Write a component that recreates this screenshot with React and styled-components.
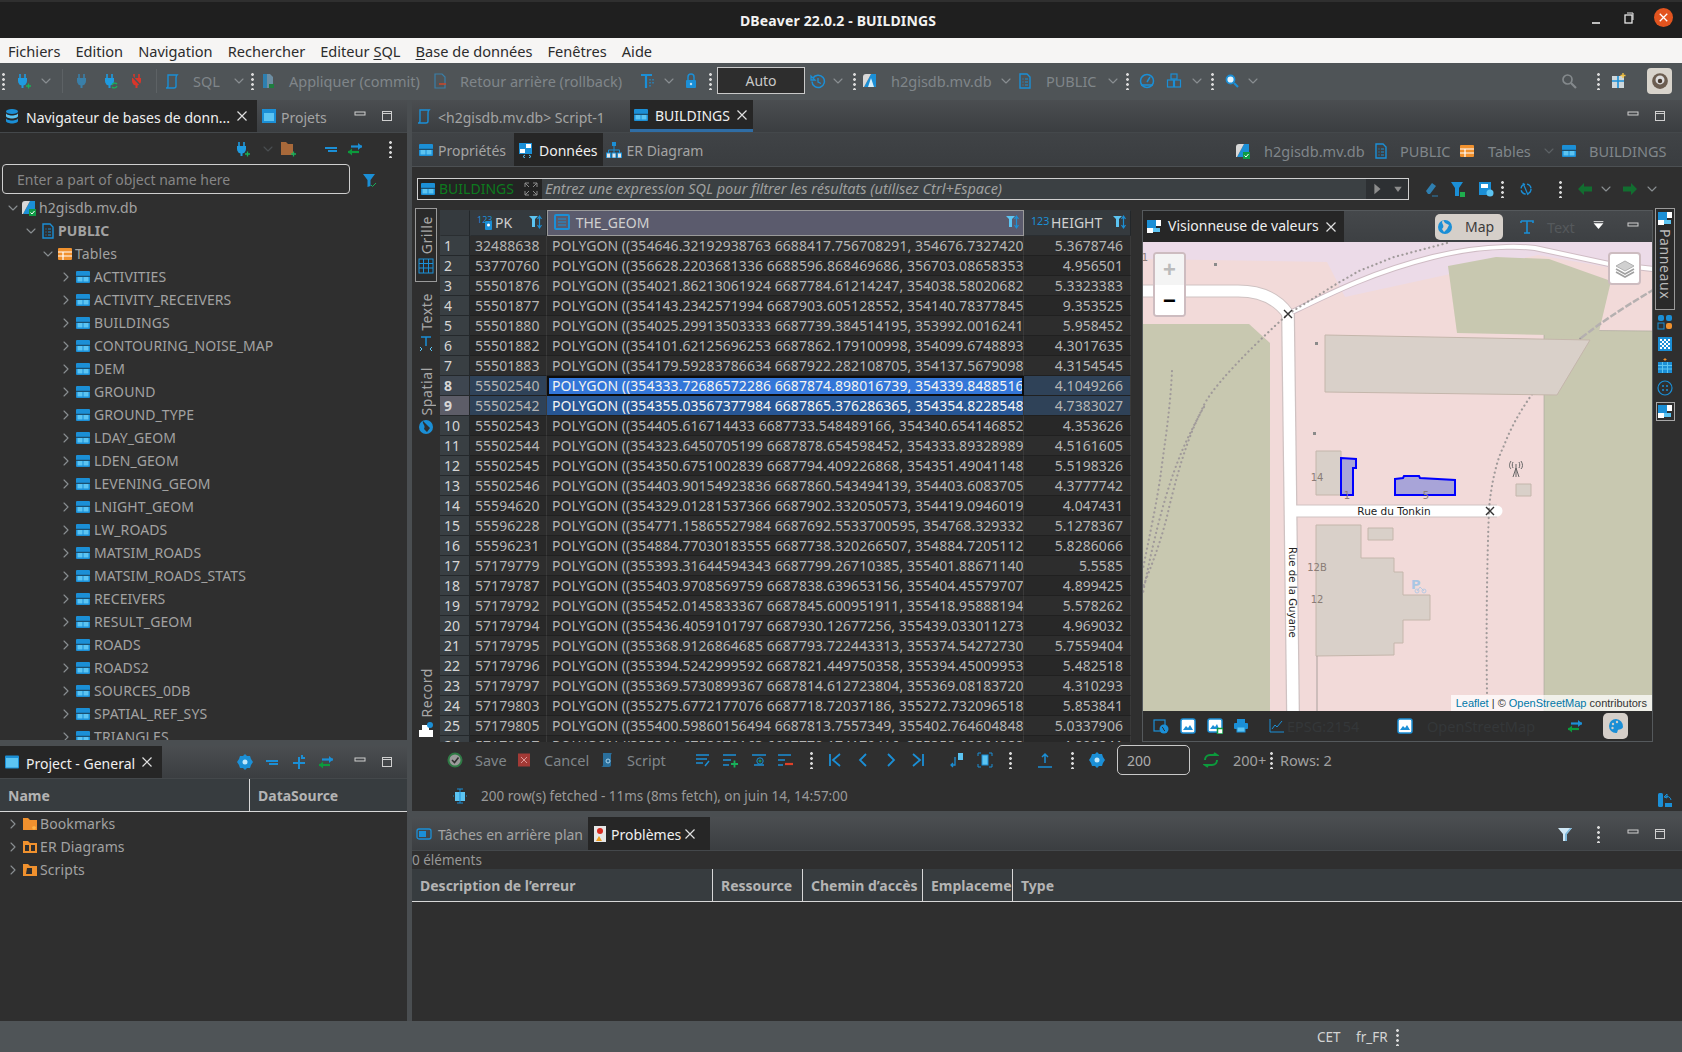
import React from 'react'
import styled, { createGlobalStyle } from 'styled-components'

const FONT = `"Noto Sans", "Open Sans", sans-serif`
const BLUE = '#1b8fd6'
const SKY = '#5cc4f2'
const ORANGE = '#f0912e'
const GREEN = '#0c9a3c'

const Global = createGlobalStyle`
    html, body { margin: 0; padding: 0; background: #2f2f2f; overflow: hidden; }
    * { box-sizing: border-box; }
    #root { width: 1682px; height: 1052px; }
`

const Window = styled.div`
    width: 1682px;
    height: 1052px;
    display: flex;
    flex-direction: column;
    background: #2f2f2f;
    color: #a6a6a6;
    font-family: ${FONT};
    font-size: 14px;
    overflow: hidden;
`

const TitleBar = styled.div`
    height: 38px;
    flex: none;
    display: flex;
    align-items: center;
    justify-content: center;
    position: relative;
    background: #1f1f1f;
    border-top: 2px solid #2f2f2f;
    color: #f2f2f2;
    font-weight: 700;
    font-size: 14px;
    letter-spacing: 0.15px;
    padding-right: 6px;
`

const WinButtons = styled.div`
    position: absolute;
    right: 9px;
    top: 6px;
    display: flex;
    align-items: center;
    gap: 17px;
`

const WinClose = styled.div`
    width: 19px;
    height: 19px;
    border-radius: 50%;
    background: #e2541f;
    display: flex;
    align-items: center;
    justify-content: center;
`

const MenuBar = styled.div`
    height: 25px;
    flex: none;
    display: flex;
    align-items: center;
    gap: 15px;
    padding-left: 8px;
    background: #f6f5f4;
    color: #2c2c2c;
    font-size: 14.6px;
`

const MainBar = styled.div`
    height: 37px;
    flex: none;
    background: #4f5457;
    display: flex;
    align-items: center;
    padding-bottom: 2px;
`

const Slots = styled.div`
    display: flex;
    align-items: center;
    height: 100%;
    flex: none;
    padding-left: ${(p) => p.$pl}px;
`

const Slot = styled.div`
    flex: none;
    width: ${(p) => p.$w}px;
    display: flex;
    align-items: center;
    white-space: nowrap;
`

const DimText = styled.span`
    color: ${(p) => p.$c || '#80868a'};
    font-size: 14.5px;
`

const Dots = styled.span`
    display: block;
    width: 3px;
    height: 18px;
    margin-left: ${(p) => p.$ml || 0}px;
    margin-right: ${(p) => p.$mr || 0}px;
    background: radial-gradient(circle, #d8d8d8 1.3px, transparent 1.5px) 0 0 / 3px 5px repeat-y;
`

const Sep = styled.span`
    display: block;
    width: 1px;
    height: 24px;
    background: #5d6265;
`

const AutoBox = styled.div`
    width: 88px;
    height: 27px;
    background: #2d2d2d;
    border: 1px solid #c9c9c9;
    display: flex;
    align-items: center;
    justify-content: center;
    color: #c8c8c8;
    font-size: 14px;
`

const Perspective = styled.div`
    width: 25px;
    height: 26px;
    border-radius: 4px;
    background: #d8d4cc;
    display: flex;
    align-items: center;
    justify-content: center;
`

const Workbench = styled.div`
    flex: 1;
    min-height: 0;
    display: flex;
    background: #4a4e51;
`

const LeftColumn = styled.div`
    width: 407px;
    flex: none;
    display: flex;
    flex-direction: column;
    gap: 6px;
`

const RightColumn = styled.div`
    width: 1270px;
    flex: none;
    margin-left: 5px;
    display: flex;
    flex-direction: column;
    gap: 6px;
`

const Pane = styled.div`
    height: ${(p) => p.$h}px;
    flex: none;
    display: flex;
    flex-direction: column;
    background: #2f2f2f;
    overflow: hidden;
`

const TabBar = styled.div`
    height: ${(p) => p.$h || 33}px;
    flex: none;
    display: flex;
    align-items: stretch;
    background: linear-gradient(#4b4e51, #3b3e41);
    border-bottom: 1px solid #44484b;
`

const Tab = styled.div`
    display: flex;
    align-items: center;
    gap: ${(p) => p.$gap || 6}px;
    padding: ${(p) => p.$pad || '0 8px'};
    width: ${(p) => (p.$w ? p.$w + 'px' : 'auto')};
    background: ${(p) => (p.$active ? '#262626' : 'transparent')};
    color: ${(p) => (p.$active ? '#f0f0f0' : '#a4a4a4')};
    font-size: 14px;
    white-space: nowrap;
    border-bottom: ${(p) => (p.$line ? '3px solid #2f6da5' : 'none')};
    flex: none;

    & > span {
        padding: ${(p) => (p.$flat ? '0 0 2px' : '2px 0 0')};
    }
`

const TabEnd = styled.div`
    margin-left: auto;
    display: flex;
    align-items: center;
    gap: ${(p) => p.$gap || 15}px;
    padding-right: ${(p) => p.$pr || 16}px;
`

const WinCtl = styled.div`
    display: flex;
    align-items: center;
    gap: 15px;
    margin-left: ${(p) => p.$ml || 0}px;
`

const NavTools = styled.div`
    height: 31px;
    flex: none;
    display: flex;
    align-items: center;
`

const SearchRow = styled.div`
    height: 32px;
    flex: none;
    display: flex;
    align-items: center;
    padding-left: 2px;
    gap: 11px;
`

const SearchBox = styled.div`
    width: 348px;
    height: 30px;
    align-self: flex-start;
    border: 1px solid #cfcfcf;
    border-radius: 4px;
    display: flex;
    align-items: center;
    padding-left: 14px;
    color: #868686;
    font-size: 14px;
`

const TreeList = styled.div`
    flex: 1;
    min-height: 0;
    overflow: hidden;
`

const TreeRow = styled.div`
    height: ${(p) => p.$h || 23}px;
    display: flex;
    align-items: center;
    padding-left: ${(p) => p.$pad}px;
    gap: ${(p) => p.$gap || 2}px;
    font-weight: ${(p) => (p.$bold ? 700 : 400)};
    font-size: 14px;
    letter-spacing: 0.1px;
    color: #a2a2a2;
    white-space: nowrap;
`

const ColumnHead = styled.div`
    height: ${(p) => p.$h || 33}px;
    flex: none;
    display: flex;
    background: #373c3f;
    border-bottom: 1px solid #d8d8d8;
    font-weight: 700;
    font-size: 14px;
    color: #b4b4b4;
`

const ColumnCell = styled.div`
    width: ${(p) => (p.$w ? p.$w + 'px' : 'auto')};
    flex: ${(p) => (p.$w ? 'none' : 1)};
    display: flex;
    align-items: center;
    padding-left: 8px;
    white-space: nowrap;
    overflow: hidden;
    border-right: ${(p) => (p.$w ? '1px solid #d8d8d8' : 'none')};
`

const SubTabs = styled.div`
    height: 34px;
    flex: none;
    display: flex;
    align-items: stretch;
    background: linear-gradient(#404346, #3a3d40);
    border-bottom: 1px solid #4c5053;
`

const Crumbs = styled.div`
    margin-left: auto;
    display: flex;
    align-items: center;
    height: 100%;
    padding-top: 2px;
`

const FilterRow = styled.div`
    height: 41px;
    flex: none;
    display: flex;
    align-items: center;
    padding: 2px 0 0 5px;
`

const FilterBox = styled.div`
    width: 992px;
    height: 22px;
    flex: none;
    display: flex;
    align-items: stretch;
    background: #3b4043;
    border: 1px solid #cfcfcf;
    font-size: 14px;
`

const FilterTable = styled.div`
    width: 124px;
    flex: none;
    background: #232323;
    display: flex;
    align-items: center;
    gap: 3px;
    padding: 0 3px 0 2px;
    color: #0d7a1e;
    white-space: nowrap;

    & > span {
        padding-bottom: 1px;
    }
    & > svg:last-child {
        margin-left: auto;
    }
`

const FilterHint = styled.div`
    flex: 1;
    padding: 0 0 2px 3px;
    display: flex;
    align-items: center;
    font-style: italic;
    font-size: 14.5px;
    color: #a0a0a0;
    white-space: nowrap;
`

const FilterEnd = styled.div`
    width: 42px;
    flex: none;
    background: #2d3033;
    display: flex;
    align-items: center;
    justify-content: space-around;
`

const EditorBody = styled.div`
    height: 534px;
    flex: none;
    display: flex;
    padding-left: 3px;
`

const VerticalTabs = styled.div`
    width: 22px;
    flex: none;
    margin-right: 3px;
    display: flex;
    flex-direction: column;
    align-items: center;
`

const VTab = styled.div`
    width: 100%;
    height: ${(p) => p.$h}px;
    margin-top: ${(p) => p.$mt || 0}px;
    flex: none;
    display: flex;
    flex-direction: column;
    align-items: center;
    justify-content: center;
    gap: 4px;
    border: ${(p) => (p.$active ? '1px solid #9a9a9a' : 'none')};
    background: ${(p) => (p.$active ? '#2a2a2a' : 'transparent')};
    color: #a8a8a8;
    font-size: 14px;
    letter-spacing: 0.6px;
`

const VLabel = styled.span`
    writing-mode: vertical-rl;
    transform: rotate(${(p) => (p.$down ? 0 : 180)}deg);
`

const GridWrap = styled.div`
    width: 691px;
    flex: none;
    margin-top: 2px;
    margin-right: 11px;
    height: 532px;
    overflow: hidden;
    background: #2b2b2b;
`

const GridRow = styled.div`
    display: grid;
    grid-template-columns: 30px 77px 477px 107px;
    height: ${(p) => (p.$head ? 26 : 20)}px;
`

const HeadCell = styled.div`
    display: flex;
    align-items: center;
    gap: 2px;
    padding-left: 6px;
    padding-bottom: 2px;
    background: ${(p) => (p.$sel ? '#5b5b6d' : '#353a3e')};
    border-right: 1px solid ${(p) => (p.$sel ? '#9a9a9a' : '#23272a')};
    border-top: 1px solid ${(p) => (p.$sel ? '#9a9a9a' : 'transparent')};
    border-left: 1px solid ${(p) => (p.$sel ? '#9a9a9a' : 'transparent')};
    border-bottom: 1px solid ${(p) => (p.$sel ? '#9a9a9a' : '#2a2e31')};
    color: #d0d0d0;
    font-size: 14px;
`

// the underscore falls outside the painted line, as in the table header of the app
const ClippedName = styled.span`
    display: block;
    height: 15px;
    line-height: 16px;
    overflow: hidden;
    white-space: pre;
`

const SortMark = styled.span`
    margin-left: auto;
    margin-right: 2px;
    display: flex;
`

const NumCell = styled.div`
    background: ${(p) => (p.$focus ? '#5d5d68' : p.$active ? '#3e4650' : '#393f43')};
    color: #d6d6d6;
    display: flex;
    align-items: center;
    padding-left: 4px;
    font-size: 14px;
    border-bottom: 1px solid #24282b;
    border-right: 1px solid #23272a;
    font-weight: ${(p) => (p.$active || p.$focus ? 700 : 400)};
`

const DataCell = styled.div`
    background: ${(p) => (p.$bg ? p.$bg : p.$odd ? '#282828' : '#2d2d2d')};
    color: ${(p) => p.$color || '#b5b5b5'};
    display: flex;
    align-items: center;
    padding-left: 5px;
    padding-right: ${(p) => (p.$right ? 7 : 0)}px;
    justify-content: ${(p) => (p.$right ? 'flex-end' : 'flex-start')};
    white-space: nowrap;
    overflow: hidden;
    font-size: 14px;
    letter-spacing: 0.05px;
    border-bottom: 1px solid #202020;
    border-right: 1px solid #3a3a3a;
    outline: ${(p) => (p.$cursor ? '2px solid #0c0c0c' : 'none')};
    outline-offset: -2px;
`

const ValuePanel = styled.div`
    width: 511px;
    flex: none;
    margin-top: 2px;
    height: 532px;
    display: flex;
    flex-direction: column;
    border: 1px solid #55595c;
`

const ValueTabs = styled.div`
    height: 31px;
    flex: none;
    display: flex;
    align-items: stretch;
    background: linear-gradient(#45484b, #3d4043);
`

const ValueTools = styled.div`
    display: flex;
    align-items: center;
    flex: none;
`

const MapToggle = styled.div`
    width: 68px;
    height: 26px;
    flex: none;
    margin-left: ${(p) => p.$ml}px;
    background: #d5cfc9;
    border-radius: 5px;
    display: flex;
    align-items: center;
    gap: 12px;
    padding-left: 2px;
    color: #3c3c3c;
    font-size: 14px;
`

const MapFrame = styled.div`
    height: 469px;
    flex: none;
    position: relative;
    background: #f2dad9;
    overflow: hidden;
`

const ZoomBox = styled.div`
    position: absolute;
    left: 10px;
    top: 10px;
    width: 33px;
    height: 65px;
    border: 2px solid #cdbcc0;
    border-radius: 4px;
    background: #fff;
    overflow: hidden;
`

const ZoomBtn = styled.div`
    height: 31px;
    display: flex;
    align-items: center;
    justify-content: center;
    background: ${(p) => (p.$off ? '#f4f4f4' : '#fff')};
    color: ${(p) => (p.$off ? '#bbb' : '#000')};
    font: 700 22px "Liberation Sans", sans-serif;
`

const LayersBtn = styled.div`
    position: absolute;
    right: 11px;
    top: 10px;
    width: 33px;
    height: 33px;
    border: 2px solid #cdbcc0;
    border-radius: 4px;
    background: #fff;
    display: flex;
    align-items: center;
    justify-content: center;
`

const Attribution = styled.div`
    position: absolute;
    right: 0;
    bottom: 0;
    height: 16px;
    padding: 0 5px;
    background: rgba(255, 255, 255, 0.72);
    font: 11px "Liberation Sans", sans-serif;
    color: #333;
    display: flex;
    align-items: center;
    white-space: pre;
`

const MapLink = styled.span`
    color: #0078a8;
`

const ValueBar = styled.div`
    flex: 1;
    display: flex;
    align-items: center;
    background: #2d2d2d;
`

const PaletteBtn = styled.div`
    width: 25px;
    height: 26px;
    border-radius: 5px;
    background: #d5cfc9;
    display: flex;
    align-items: center;
    justify-content: center;
`

const SideStrip = styled.div`
    width: 29px;
    flex: none;
    display: flex;
    flex-direction: column;
    align-items: center;
    padding-right: 5px;
    gap: 6px;
`

const SideTab = styled.div`
    width: 20px;
    height: 102px;
    border: 1px solid #9a9a9a;
    display: flex;
    flex-direction: column;
    align-items: center;
    gap: 2px;
    padding-top: 2px;
    color: #b8b8b8;
    font-size: 14px;
    letter-spacing: 0.6px;
    background: #2a2a2a;
    margin-bottom: -2px;
`

const SideFrame = styled.div`
    width: 19px;
    height: 19px;
    border: 1px solid #a8a8a8;
    display: flex;
    align-items: center;
    justify-content: center;
`

const DataBar = styled.div`
    height: 36px;
    flex: none;
    display: flex;
    align-items: center;
`

const FetchInput = styled.div`
    width: 73px;
    height: 30px;
    border: 1px solid #c9c9c9;
    border-radius: 5px;
    display: flex;
    align-items: center;
    padding-left: 9px;
    color: #adadad;
    font-size: 14px;
`

const StatusLine = styled.div`
    flex: 1;
    display: flex;
    align-items: center;
    padding: 3px 9px 0 40px;
    gap: 13px;
    color: #9a9a9a;
    font-size: 13.5px;
`

const StatusEnd = styled.span`
    margin-left: auto;
    margin-top: 8px;
    display: flex;
`

const CountLine = styled.div`
    height: 18px;
    flex: none;
    display: flex;
    align-items: center;
    color: #989898;
    font-size: 13.5px;
`

const StatusBar = styled.div`
    height: 31px;
    flex: none;
    background: #4f5457;
    display: flex;
    align-items: center;
    color: #d4d4d4;
    font-size: 13.5px;
`

const plug = (c) => (
    <>
        <path d="M5 1v4M10 1v4" stroke={c} strokeWidth="1.6" fill="none" />
        <path d="M3 5h9v3a4.5 4.5 0 0 1-9 0z" fill={c} />
        <path d="M7.5 12v3" stroke={c} strokeWidth="2" />
    </>
)

const ICONS = {
    plugNew: <>{plug('#1f9be0')}<path d="M11 13h5M13.5 10.5v5" stroke="#18b05a" strokeWidth="1.3" /></>,
    plugDim: <>{plug('#3a7fa8')}</>,
    plugSync: <>{plug('#1f9be0')}<path d="M10 12a3 3 0 0 1 5-1M15 13a3 3 0 0 1-5 1" stroke="#18b05a" strokeWidth="1.3" fill="none" /></>,
    plugOff: <>{plug('#d9362a')}<path d="M2 2l12 13" stroke="#4f5457" strokeWidth="1.5" /></>,
    script: <path d="M4 2h9c-1 1-1 2-1 3v8c0 1-1 2-2 2H2c1 0 2-.5 2-2z" fill="none" stroke={BLUE} strokeWidth="1.4" />,
    commit: <><path d="M3 1h7l3 3v11H3z" fill="#6d8ea3" /><path d="M3 1h4v14H3z" fill="#2d7fb0" /><rect x="9" y="11" width="5" height="4" fill="#1e7d3e" /></>,
    rollback: <><path d="M3 1h7l3 3v11H3z" fill="none" stroke="#3a7fa8" strokeWidth="1.2" /><path d="M7 11h7" stroke="#c6482c" strokeWidth="1.6" /></>,
    ttable: <><path d="M2 2h11M7 2v13" stroke={BLUE} strokeWidth="2.2" /><path d="M11 6v8M14 6v6" stroke={BLUE} strokeWidth="1.2" strokeDasharray="1.5 1.5" /></>,
    lock: <><path d="M5 7V4a3 3 0 0 1 6 0v3" stroke={BLUE} strokeWidth="1.5" fill="none" /><rect x="3" y="7" width="10" height="8" rx="1" fill={BLUE} /><circle cx="8" cy="11" r="1.2" fill="#bfe3f8" /></>,
    history: <><path d="M3 5a6.2 6.2 0 1 1-1 3.5" stroke={BLUE} strokeWidth="1.5" fill="none" /><path d="M1 3v4h4zM8 5v4l3 1.5" stroke={BLUE} strokeWidth="1.3" fill="none" /></>,
    db: <><path d="M2 14L9 1h5v13z" fill={BLUE} /><path d="M2 14L9 1H4a3 3 0 0 0-3 3v10z" fill="#d8d8d8" /><path d="M9 5l3 9H6z" fill="#d8f0fb" /></>,
    dbOk: <><path d="M2 14L9 1h5v13z" fill={BLUE} /><path d="M2 14L9 1H4a3 3 0 0 0-3 3v10z" fill="#d8d8d8" /><rect x="8" y="9" width="7" height="7" fill="#109a45" /><path d="M9.5 12.5l1.5 1.5 2.5-3" stroke="#fff" fill="none" /></>,
    schema: <><path d="M3 1h7l3 3v11H3z" fill="none" stroke={BLUE} strokeWidth="1.4" /><path d="M5.5 6h1M8 6h3M5.5 9h1M8 9h3M5.5 12h1M8 12h3" stroke={BLUE} strokeWidth="1.2" /></>,
    gauge: <><circle cx="8" cy="8" r="6.5" fill="none" stroke={BLUE} strokeWidth="1.5" /><path d="M8 9l3-5M2 12h12" stroke={BLUE} strokeWidth="1.5" /></>,
    boxes: <><rect x="5" y="1" width="6" height="5" fill="none" stroke={BLUE} strokeWidth="1.2" /><rect x="1.5" y="7" width="6" height="7" fill="none" stroke={BLUE} strokeWidth="1.2" /><rect x="8.5" y="7" width="6" height="7" fill="none" stroke={BLUE} strokeWidth="1.2" /></>,
    find: <><circle cx="6.5" cy="6.5" r="4" fill="#e4f4fd" stroke={BLUE} strokeWidth="1.8" /><path d="M10 10l4 4" stroke={BLUE} strokeWidth="2.2" /></>,
    findDim: <><circle cx="6.5" cy="6.5" r="4.5" fill="none" stroke="#84898c" strokeWidth="1.7" /><path d="M10 10l5 5" stroke="#84898c" strokeWidth="2.2" /></>,
    perspAdd: <><rect x="1" y="3" width="12" height="12" fill="#cfd8dc" /><path d="M1 8h12M7 3v12" stroke="#1b8fd6" strokeWidth="1.6" /><path d="M12 0v5M9.5 2.5h5" stroke="#f0c040" strokeWidth="1.4" /></>,
    navDb: <><ellipse cx="8" cy="3.5" rx="6" ry="2.5" fill={BLUE} /><path d="M2 5v3c0 1.5 3 2.5 6 2.5S14 9.5 14 8V5c0 1.5-3 2.5-6 2.5S2 6.5 2 5z" fill={SKY} /><path d="M2 10v3c0 1.5 3 2.5 6 2.5s6-1 6-2.5v-3c0 1.5-3 2.5-6 2.5s-6-1-6-2.5z" fill={BLUE} /></>,
    project: <><rect x="1" y="1" width="14" height="14" fill={BLUE} /><rect x="3" y="5" width="10" height="8" fill={SKY} /></>,
    projectWide: <><rect x="1" y="1.5" width="14" height="13" rx="1" fill={BLUE} /><rect x="2" y="4" width="12" height="9.5" fill={SKY} /></>,
    table: <><rect x="1" y="2" width="14" height="12" rx="1" fill={BLUE} /><rect x="2.5" y="8" width="5" height="4.5" fill={SKY} /><rect x="8.5" y="8" width="5" height="4.5" fill={SKY} /><path d="M1 7.3h14" stroke="#1c3f55" strokeWidth="1" /></>,
    data: <><rect x="1" y="1" width="13" height="11" fill={BLUE} /><rect x="8" y="2" width="5" height="4" fill="#fff" /><rect x="2" y="7" width="5" height="4" fill="#fff" /><path d="M7 13l-2 1.5 2 1.5M11 13l2 1.5-2 1.5" stroke={SKY} fill="none" /></>,
    er: <><rect x="6" y="0" width="4" height="4" fill={BLUE} /><path d="M8 4v4M2.5 11V8h11v3M8 8v3" stroke={BLUE} fill="none" /><rect x="0.5" y="11" width="4" height="5" fill="#e6e6e6" stroke={BLUE} /><rect x="6" y="11" width="4" height="5" fill="#e6e6e6" stroke={BLUE} /><rect x="11.5" y="11" width="4" height="5" fill="#e6e6e6" stroke={BLUE} /></>,
    tables: <><rect x="1" y="2" width="14" height="12" rx="1" fill={ORANGE} /><path d="M1 6h14M1 10h14M6 6v8" stroke="#fff" strokeWidth="1.2" /></>,
    folder: <><path d="M1 2h5l2 2h7v10H1z" fill={ORANGE} /><path d="M10 11l2-1 2 1-1 3-1-1-1 1z" fill="#ffb347" /></>,
    folderNew: <><path d="M1 1h5l2 2h5v11H1z" fill="#a8693a" /><path d="M11 13h5M13.5 10.5v5" stroke="#18b05a" strokeWidth="1.3" /></>,
    folderEr: <><path d="M1 2h5l2 2h7v10H1z" fill={ORANGE} /><rect x="3" y="6" width="4" height="6" fill="#2f2f2f" /><rect x="9" y="6" width="4" height="6" fill="#2f2f2f" /></>,
    folderSc: <><path d="M1 2h5l2 2h7v10H1z" fill={ORANGE} /><path d="M5 6h5v6H4z" fill="#2f2f2f" /></>,
    funnel: <><path d="M2 2h12L9.5 8v6l-3 1V8z" fill={BLUE} /><path d="M10 13l1.5 1.5L15 11" stroke="#18b05a" fill="none" /></>,
    funnelPlain: <><path d="M1 2h14L10 8v7H6V8z" fill="#cfe7f5" /><path d="M10 8v7H8V8l5-6h2z" fill="#7fb9dc" /></>,
    funnelOk: <><path d="M1 1h12L9 7v8H5V7z" fill={BLUE} /><rect x="10" y="11" width="5" height="5" fill="#1fae4e" /></>,
    collapse: <path d="M2 7h12M5 10h9" stroke={BLUE} strokeWidth="2" />,
    swap: <><path d="M1 11h11" stroke={GREEN} strokeWidth="2.2" /><path d="M5 7.5L1 11l4 3.5z" fill={GREEN} /><path d="M4 5.5h11" stroke={BLUE} strokeWidth="2.2" /><path d="M11 2l4 3.5L11 9z" fill={BLUE} /></>,
    gear: <><path d="M8 0l2 2h3l1 3 2 3-2 3-1 3h-3l-2 2-2-2H3l-1-3-2-3 2-3 1-3h3z" fill={BLUE} /><circle cx="8" cy="8" r="2.5" fill="#bfe7fb" /></>,
    plus: <path d="M2 9h12M8 3v12M11 1v3h3" stroke={BLUE} strokeWidth="2" fill="none" />,
    ok: <><circle cx="8" cy="8" r="6.5" fill="#9a9a9a" stroke="#2f7a45" strokeWidth="2" /><path d="M5 8l2.5 2.5L11.5 5.5" stroke="#2f2f2f" strokeWidth="1.6" fill="none" /></>,
    cancel: <><rect x="2" y="1.5" width="12" height="13" fill="#a33a36" /><path d="M5 5l6 6M11 5l-6 6" stroke="#d99" strokeWidth="1" /></>,
    scriptRun: <><path d="M4 1h9c-1 1-1 2-1 3v9c0 1-1 2-2 2H2c1 0 2-1 2-2z" fill="#2a6f9c" /><circle cx="9" cy="9" r="2" fill="none" stroke="#a8d4ee" /></>,
    rowEdit: <path d="M1 3h13M1 7h11M1 11h7M10 14l4-5" stroke={BLUE} strokeWidth="1.5" fill="none" />,
    rowAdd: <><path d="M1 3h13M1 8h8M1 13h6" stroke={BLUE} strokeWidth="1.5" /><path d="M9 12h7M12.5 8.5v7" stroke="#18b05a" strokeWidth="1.8" /></>,
    rowCopy: <><path d="M1 3h14M3 13h10" stroke={BLUE} strokeWidth="1.5" /><circle cx="9" cy="9" r="3.2" fill="none" stroke={BLUE} /><path d="M9 7.5v3M7.5 9h3" stroke="#18b05a" /></>,
    rowDel: <><path d="M1 3h13M1 8h7M1 13h5" stroke={BLUE} strokeWidth="1.5" /><path d="M8 12h8" stroke="#e04028" strokeWidth="2.2" /></>,
    first: <path d="M3 2v12M13 2L6 8l7 6" stroke={BLUE} strokeWidth="1.8" fill="none" />,
    prev: <path d="M11 2L5 8l6 6" stroke={BLUE} strokeWidth="1.8" fill="none" />,
    next: <path d="M5 2l6 6-6 6" stroke={BLUE} strokeWidth="1.8" fill="none" />,
    last: <path d="M13 2v12M3 2l7 6-7 6" stroke={BLUE} strokeWidth="1.8" fill="none" />,
    pageDown: <><rect x="9" y="1" width="5" height="7" fill={SKY} /><path d="M6 5v8H2M4 11l-2 2 2 2" stroke={BLUE} strokeWidth="1.3" fill="none" /></>,
    focus: <><rect x="5" y="3" width="6" height="10" fill={SKY} stroke={BLUE} /><path d="M1 4V1h3M12 1h3v3M1 12v3h3M12 15h3v-3" stroke={BLUE} fill="none" /></>,
    exportUp: <path d="M8 11V2M5 5l3-3 3 3M1 15h14" stroke={BLUE} strokeWidth="1.5" fill="none" />,
    sync: <path d="M2 8a5 5 0 0 1 5-5h7l-3-2M14 8a5 5 0 0 1-5 5H2l3 2" stroke={GREEN} strokeWidth="2" fill="none" />,
    fetchInfo: <><rect x="3" y="4" width="10" height="9" fill={SKY} /><path d="M5 1h6M8 1v14M5 15h6M1 8h1M14 8h1" stroke={BLUE} /></>,
    panelBack: <><rect x="1" y="1" width="5" height="14" rx="1.5" fill={BLUE} /><path d="M8 5a4 4 0 0 1 6 3M7 5l3-3v4z" stroke={BLUE} fill="none" /><rect x="8" y="11" width="7" height="4" fill={BLUE} /></>,
    tasks: <><rect x="1" y="3" width="14" height="10" rx="2" fill="none" stroke={BLUE} strokeWidth="1.3" /><rect x="3" y="5" width="7" height="6" fill={BLUE} /></>,
    problems: <><rect x="2" y="0" width="12" height="16" fill="#e6e6e6" /><circle cx="8" cy="5" r="3" fill="#d82a20" /><path d="M4 15l3-5 3 5z" fill="#f0a020" /></>,
    eraser: <><path d="M3 10l6-8 4 3-6 8H5z" fill="#2f7fb0" /><path d="M9 15h6" stroke="#2f7fb0" /></>,
    saveCfg: <><rect x="1" y="1" width="12" height="13" fill={BLUE} /><rect x="3" y="3" width="7" height="4" fill="#fff" /><circle cx="12" cy="12" r="3.5" fill={SKY} /></>,
    refresh: <><circle cx="8" cy="8" r="5" fill="none" stroke={BLUE} strokeWidth="1.4" strokeDasharray="6 2" /><path d="M5 2l5 12" stroke={BLUE} strokeWidth="1.2" /></>,
    arrowL: <path d="M1 8l6-6v3.5h8v5H7V14z" fill="#126e30" />,
    arrowR: <path d="M15 8L9 2v3.5H1v5h8V14z" fill="#126e30" />,
    viewer: <><rect x="1" y="1" width="9" height="8" fill={BLUE} /><rect x="10" y="1" width="5" height="6" fill="#fff" /><rect x="1" y="9" width="6" height="5" fill="#fff" /><rect x="7" y="9" width="7" height="4" fill={SKY} /></>,
    globe: <><circle cx="8" cy="8" r="7" fill={BLUE} /><path d="M6 1c-3 4 3 5-1 9l2 3 3-3 2-4-4-2z" fill="#d5cfc9" /></>,
    bigT: <path d="M2 2h12v2M2 2v2M8 2v12M5 14h6" stroke={BLUE} strokeWidth="1.6" fill="none" />,
    viewMap: <><rect x="1" y="2" width="11" height="11" fill="none" stroke={BLUE} strokeWidth="1.2" /><circle cx="11" cy="11" r="4.5" fill={BLUE} /><path d="M9 9c2 1 1 3 3 4" stroke="#2d2d2d" fill="none" /></>,
    image: <><rect x="1" y="1" width="14" height="14" rx="2" fill="#fff" stroke={BLUE} strokeWidth="1.5" /><path d="M3 12l3-4 2 2 2-3 3 5z" fill={BLUE} /></>,
    imageAdd: <><rect x="1" y="1" width="14" height="13" rx="2" fill="#fff" stroke={BLUE} strokeWidth="1.5" /><path d="M3 11l3-4 2 2 2-3 2 5z" fill={BLUE} /><rect x="10.5" y="10.5" width="5.5" height="5.5" fill="#fff" stroke="#109a45" strokeWidth="1.5" /></>,
    printer: <><rect x="4" y="1" width="8" height="4" fill={BLUE} /><rect x="1" y="5" width="14" height="6" rx="1" fill={BLUE} /><rect x="4" y="9" width="8" height="5" fill={SKY} stroke={BLUE} /></>,
    chart: <path d="M1 1v13h14M3 11l3-4 2 2 5-6" stroke={BLUE} strokeWidth="1" fill="none" />,
    palette: <><path d="M8 1a7 7 0 1 0 0 14c2 0 1-2 2-3s4 0 5-3a7.5 7.5 0 0 0-7-8z" fill={BLUE} /><circle cx="5" cy="6" r="1.2" fill="#d5cfc9" /><circle cx="9" cy="4" r="1.2" fill="#d5cfc9" /><circle cx="4.5" cy="10" r="1.2" fill="#d5cfc9" /></>,
    panels: <><rect x="1" y="1" width="6" height="6" rx="2" fill={BLUE} /><rect x="9" y="1" width="6" height="6" rx="2" fill={BLUE} /><rect x="1" y="9" width="6" height="6" fill="none" stroke={BLUE} /><rect x="9" y="9" width="6" height="6" rx="2" fill={ORANGE} /></>,
    checker: <><rect x="1" y="1" width="14" height="14" fill={BLUE} /><path d="M3 3h2v2H3zM7 3h2v2H7zM11 3h2v2h-2zM5 5h2v2H5zM9 5h2v2H9zM3 7h2v2H3zM7 7h2v2H7zM11 7h2v2h-2zM5 9h2v2H5zM9 9h2v2H9zM3 11h2v2H3zM7 11h2v2H7zM11 11h2v2h-2z" fill="#fff" /></>,
    grid: <><rect x="1" y="4" width="14" height="11" fill={BLUE} /><path d="M1 7.5h14M1 11h14M5.5 4v11M10.5 4v11" stroke={SKY} /><path d="M8 0v3M6.5 1.5h3" stroke={ORANGE} /></>,
    dotsRound: <><circle cx="8" cy="8" r="7" fill="none" stroke={BLUE} strokeWidth="1.2" /><path d="M6 6h.01M10 6h.01M6 10h.01M10 10h.01" stroke={BLUE} strokeWidth="2" strokeLinecap="round" /></>,
    gridSmall: <><rect x="1" y="1" width="14" height="14" fill="none" stroke={BLUE} /><path d="M1 5.5h14M1 10h14M5.500 1v14M10.500 1v14" stroke={BLUE} /></>,
    ttext: <><path d="M3 2h10M8 2v9" stroke={BLUE} strokeWidth="1.5" /><path d="M2 12l2 2-2 2M14 12l-2 2 2 2" stroke={SKY} fill="none" /></>,
    record: <><path d="M1 8h14v7H1z" fill="#fff" /><path d="M4 8V3h7v5" fill="#fff" /><circle cx="12" cy="3" r="3" fill={BLUE} /></>,
    globeSmall: <><circle cx="8" cy="8" r="7" fill={BLUE} /><path d="M5 2c-1 3 3 4 1 8l3 3 3-4-3-3z" fill="#2f2f2f" /></>,
    pk: <><text x="0" y="9" fontSize="9" fill={BLUE} fontFamily="Noto Sans">123</text><rect x="8" y="7" width="7" height="9" rx="1" fill={BLUE} /><circle cx="11.5" cy="11" r="1.5" fill="#fff" /></>,
    text123: <text x="0" y="11" fontSize="9.5" fill={BLUE} fontFamily="Noto Sans">123</text>,
    geom: <><rect x="1" y="1" width="14" height="14" rx="1" fill="none" stroke={BLUE} strokeWidth="2" /><path d="M4 5h8M4 8h8M4 11h8" stroke={BLUE} strokeWidth="1.2" /></>,
    sort: <><path d="M1 2h9L7 5v8H4V5z" fill={SKY} /><path d="M11.5 2v12M9.5 5l2-3 2 3M9.5 11l2 3 2-3" stroke={BLUE} strokeWidth="1.2" fill="none" /></>,
    expand: <path d="M2 2l4 4M2 6V2h4M14 2l-4 4M14 6V2h-4M2 14l4-4M2 10v4h4M14 14l-4-4M14 10v4h-4" stroke="#8c8c8c" strokeWidth="1" fill="none" />,
    play: <path d="M5 2l7 6-7 6z" fill="#8c8c8c" />,
    dropGrey: <path d="M3 5h10l-5 7z" fill="#8c8c8c" />,
    dropWhite: <><path d="M2 4h12l-6 7z" fill="#fff" /><path d="M2 2h12" stroke="#fff" /></>,
    closeWin: <path d="M4 4l8 8M12 4l-8 8" stroke="#fff" strokeWidth="1.4" />,
    min: <path d="M4 13h8" stroke="#e8e8e8" strokeWidth="1.6" />,
    restore: <><rect x="4" y="5" width="7" height="8" fill="none" stroke="#e8e8e8" strokeWidth="1.3" /><path d="M6 3h6v7" stroke="#e8e8e8" fill="none" /></>,
    person: <><circle cx="8" cy="8" r="7" fill="#6b5d50" /><circle cx="8" cy="7" r="4" fill="#ddd" /><circle cx="8" cy="8" r="2" fill="#4a3d33" /></>,
}

const Ic = ({ n, s = 16 }) => (
    <svg width={s} height={s} viewBox="0 0 16 16" style={{ flex: 'none' }}>{ICONS[n]}</svg>
)

const Chevron = ({ dir = 'down', c = '#8a8f92', s = 12 }) => (
    <svg width={s} height={s} viewBox="0 0 12 12" style={{ flex: 'none' }}>
        <path d={dir === 'down' ? 'M2 4l4 4 4-4' : 'M4 2l4 4-4 4'} fill="none" stroke={c} strokeWidth="1.1" strokeLinecap="round" strokeLinejoin="round" />
    </svg>
)

const CloseX = ({ c = '#e0e0e0' }) => (
    <svg width="12" height="12" viewBox="0 0 12 12" style={{ flex: 'none' }}>
        <path d="M1.5 1.5l9 9M10.5 1.5l-9 9" stroke={c} strokeWidth="1.2" />
    </svg>
)

const MinBtn = () => (
    <svg width="12" height="12" viewBox="0 0 12 12" style={{ flex: 'none' }}>
        <rect x="1" y="2" width="10" height="3" fill="none" stroke="#cfcfcf" />
    </svg>
)

const MaxBtn = () => (
    <svg width="12" height="12" viewBox="0 0 12 12" style={{ flex: 'none' }}>
        <rect x="1.5" y="1.5" width="9" height="9" fill="none" stroke="#cfcfcf" />
        <path d="M1.5 3.5h9" stroke="#cfcfcf" />
    </svg>
)

// lays a row of items out in flow; each one fills the room up to the next x
function Strip({ items, origin = 0, last = 40 }) {
    return (
        <Slots $pl={items[0][0] - origin}>
            {items.map(([x, node], i) => (
                <Slot key={i} $w={i < items.length - 1 ? items[i + 1][0] - x : last}>{node}</Slot>
            ))}
        </Slots>
    )
}

const Under = styled.span`
    text-decoration: underline;
    text-underline-offset: 2px;
`

const tree = ['ACTIVITIES', 'ACTIVITY_RECEIVERS', 'BUILDINGS', 'CONTOURING_NOISE_MAP', 'DEM', 'GROUND', 'GROUND_TYPE', 'LDAY_GEOM', 'LDEN_GEOM', 'LEVENING_GEOM', 'LNIGHT_GEOM', 'LW_ROADS', 'MATSIM_ROADS', 'MATSIM_ROADS_STATS', 'RECEIVERS', 'RESULT_GEOM', 'ROADS', 'ROADS2', 'SOURCES_0DB', 'SPATIAL_REF_SYS', 'TRIANGLES']

const rows = [
    ['32488638', '354646.32192938763 6688417.756708291, 354676.73274203', '5.3678746'],
    ['53770760', '356628.2203681336 6688596.868469686, 356703.086583537', '4.956501'],
    ['55501876', '354021.86213061924 6687784.61214247, 354038.580206827', '5.3323383'],
    ['55501877', '354143.2342571994 6687903.605128552, 354140.78377845', '9.353525'],
    ['55501880', '354025.29913503333 6687739.384514195, 353992.00162411', '5.958452'],
    ['55501882', '354101.62125696253 6687862.179100998, 354099.674889300', '4.3017635'],
    ['55501883', '354179.59283786634 6687922.282108705, 354137.56790985', '4.3154545'],
    ['55502540', '354333.72686572286 6687874.898016739, 354339.8488516', '4.1049266'],
    ['55502542', '354355.03567377984 6687865.376286365, 354354.822854806', '4.7383027'],
    ['55502543', '354405.616714433 6687733.548489166, 354340.654146852', '4.353626'],
    ['55502544', '354323.6450705199 6687878.654598452, 354333.893289895', '4.5161605'],
    ['55502545', '354350.6751002839 6687794.409226868, 354351.490411481', '5.5198326'],
    ['55502546', '354403.90154923836 6687860.543494139, 354403.608370540', '4.3777742'],
    ['55594620', '354329.01281537366 6687902.332050573, 354419.094601980', '4.047431'],
    ['55596228', '354771.15865527984 6687692.5533700595, 354768.32933200', '5.1278367'],
    ['55596231', '354884.77030183555 6687738.320266507, 354884.72051120', '5.8286066'],
    ['57179779', '355393.31644594343 6687799.26710385, 355401.88671140', '5.5585'],
    ['57179787', '355403.9708569759 6687838.639653156, 355404.45579707', '4.899425'],
    ['57179792', '355452.0145833367 6687845.600951911, 355418.958881948', '5.578262'],
    ['57179794', '355436.4059101797 6687930.12677256, 355439.033011273', '4.969032'],
    ['57179795', '355368.9126864685 6687793.722443313, 355374.542727302', '5.7559404'],
    ['57179796', '355394.5242999592 6687821.449750358, 355394.450099533', '5.482518'],
    ['57179797', '355369.5730899367 6687814.612723804, 355369.081837203', '4.310293'],
    ['57179803', '355275.6772177076 6687718.72037186, 355272.732096518', '5.853841'],
    ['57179805', '355400.59860156494 6687813.7557349, 355402.764604848', '5.0337906'],
    ['57179807', '355361.6758979163 6687770.174179416, 355358.69264888', '4.808841'],
]

const BUILDING = { fill: '#d9d0c9', stroke: '#c4b6ab', strokeWidth: 1 }
const BLUEGEOM = { fill: '#a8a4d8', stroke: '#0000ff', strokeWidth: 2 }
const DOTTED = { fill: 'none', stroke: '#a09a9a', strokeWidth: 2.2, strokeDasharray: '0.1 4.5', strokeLinecap: 'round' }
const LABEL = { fontFamily: '"DejaVu Sans", sans-serif', fontSize: 10, fill: '#8a7c76', textAnchor: 'middle' }

function Roads() {
    return (
        <>
            <path d="M0 49H95c20 0 38 6 50 23" fill="none" stroke="#cfc2c2" strokeWidth="13" />
            <path d="M145 72L150 469" fill="none" stroke="#cfc2c2" strokeWidth="14" />
            <path d="M150 269H354" fill="none" stroke="#cfc2c2" strokeWidth="13" />
            <path d="M145 72C190 50 230 30 290 15S392 6 392 6L466 22 510 27" fill="none" stroke="#cfbcc4" strokeWidth="6" />
            <path d="M0 49H95c20 0 38 6 50 23" fill="none" stroke="#fff" strokeWidth="11" />
            <path d="M145 72L150 469" fill="none" stroke="#fff" strokeWidth="11.5" />
            <path d="M150 269H354" fill="none" stroke="#fff" strokeWidth="11" strokeLinecap="round" />
            <path d="M145 72C190 50 230 30 290 15S392 6 392 6L466 22 510 27" fill="none" stroke="#fff" strokeWidth="4" />
        </>
    )
}

function MapDrawing() {
    return (
        <svg width="510" height="469" viewBox="0 0 510 469" style={{ display: 'block' }}>
            <rect width="510" height="469" fill="#f2dad9" />
            <polygon points="0,0 510,0 510,28 469,26 395,13 202,55 184,20 0,17" fill="#ecdbe8" />
            <polygon points="0,82 106,82 127,101 127,469 0,469" fill="#c8c8b0" />
            <polygon points="401,88 510,89 510,469 401,469 401,212" fill="#c8c8b0" stroke="#a6a59a" strokeWidth="0.6" />
            <polygon points="305,24 353,15 406,17 468,39 455,94 314,91" fill="#c8c8b0" />
            <Roads />
            <path d="M304 1L251 15 216 29 195 41 145 72S72 137 60 165 26 217 0 351" {...DOTTED} />
            <path d="M29 129C27 170 22 199 18 230S5 300 0 327" {...DOTTED} />
            <path d="M61 165C45 190 31 244 25 270S10 320 0 345" {...DOTTED} />
            <path d="M344 451C343 390 344 320 346 268 348 240 355 215 360 206 370 180 380 165 392 148 410 125 425 108 438 96" {...DOTTED} />
            <path d="M438 96C465 75 490 60 510 48" fill="none" stroke="#b5b0b0" strokeWidth="2.5" strokeDasharray="7 2" />
            <polygon points="182,93 447,98 414,153 182,150" {...BUILDING} />
            <polygon points="173,209 198,209 198,253 173,253" {...BUILDING} />
            <polygon points="373,242 388,242 388,254 373,254" {...BUILDING} />
            <polygon points="225,286 250,286 250,298 225,298" {...BUILDING} />
            <polygon points="173,283 218,283 218,316 251,316 251,330 260,330 260,353 287,353 287,378 260,378 260,401 251,401 251,413 173,414" {...BUILDING} />
            <path d="M174 414V469" stroke="#a9a09c" strokeWidth="1" />
            <polygon points="198,216 213,217 213,226 210,226 210,253 198,253" {...BLUEGEOM} />
            <polygon points="252,237 260,236 261,234 276,234 277,236 312,238 312,253 252,253" {...BLUEGEOM} />
            <rect x="71" y="21" width="3" height="3" fill="#8a8a8a" />
            <rect x="172" y="100" width="3" height="3" fill="#8a8a8a" />
            <rect x="170" y="190" width="3" height="3" fill="#8a8a8a" />
            <g stroke="#333" strokeWidth="1.4">
                <path d="M141 68l8 8M149 68l-8 8" />
                <path d="M343 265l8 8M351 265l-8 8" />
            </g>
            <g stroke="#666" strokeWidth="1" fill="none">
                <path d="M373 222v13M370 235l3-9 3 9" />
                <path d="M368 219c-2 3-2 6 0 8M378 219c2 3 2 6 0 8M370 220c-1 2-1 4 0 6M376 220c1 2 1 4 0 6" />
            </g>
            <text x="2" y="19" {...LABEL}>1</text>
            <text x="174" y="239" {...LABEL}>14</text>
            <text x="204" y="257" {...LABEL}>1</text>
            <text x="283" y="257" {...LABEL}>5</text>
            <text x="174" y="329" {...LABEL}>12B</text>
            <text x="174" y="361" {...LABEL}>12</text>
            <text x="268" y="347" fontFamily="DejaVu Sans" fontSize="13" fontWeight="700" fill="#a9c6e4">P</text>
            <g stroke="#a9c6e4" fill="none" strokeWidth="0.8">
                <circle cx="274" cy="349" r="2" />
                <circle cx="281" cy="349" r="2" />
                <path d="M274 349l3-4 4 4" />
            </g>
            <text x="251" y="273" fontFamily="DejaVu Sans" fontSize="10.5" fill="#222" textAnchor="middle">Rue du Tonkin</text>
            <text x="0" y="0" transform="translate(146 305) rotate(90)" fontFamily="DejaVu Sans" fontSize="10.25" fill="#222">Rue de la Guyane</text>
        </svg>
    )
}

function App() {
    return (
        <Window>
            <Global />
            <TitleBar>
                DBeaver 22.0.2 - BUILDINGS
                <WinButtons>
                    <Ic n="min" />
                    <Ic n="restore" />
                    <WinClose><Ic n="closeWin" s={15} /></WinClose>
                </WinButtons>
            </TitleBar>
            <MenuBar>
                <span>Fichiers</span>
                <span>Edition</span>
                <span>Navigation</span>
                <span>Rechercher</span>
                <span>Editeur <Under>S</Under>QL</span>
                <span><Under>B</Under>ase de données</span>
                <span>Fenêtres</span>
                <span>Aide</span>
            </MenuBar>
            <MainBar>
                <Strip items={[
                    [2, <Dots />], [15, <Ic n="plugNew" />], [40, <Chevron />], [62, <Sep />],
                    [74, <Ic n="plugDim" />], [102, <Ic n="plugSync" />], [129, <Ic n="plugOff" />], [156, <Sep />],
                    [164, <Ic n="script" />], [193, <DimText>SQL</DimText>], [233, <Chevron />], [251, <Dots />],
                    [260, <Ic n="commit" />], [289, <DimText>Appliquer (commit)</DimText>],
                    [432, <Ic n="rollback" />], [460, <DimText>Retour arrière (rollback)</DimText>],
                    [639, <Ic n="ttable" />], [663, <Chevron />], [683, <Ic n="lock" />], [709, <Dots />],
                    [717, <AutoBox>Auto</AutoBox>], [810, <Ic n="history" />], [832, <Chevron />], [853, <Dots />],
                    [862, <Ic n="db" />], [891, <DimText>h2gisdb.mv.db</DimText>], [1000, <Chevron />],
                    [1017, <Ic n="schema" />], [1046, <DimText>PUBLIC</DimText>], [1107, <Chevron />], [1126, <Dots />],
                    [1139, <Ic n="gauge" />], [1166, <Ic n="boxes" />], [1191, <Chevron />], [1211, <Dots />],
                    [1224, <Ic n="find" />], [1247, <Chevron />], [1561, <Ic n="findDim" />], [1597, <Dots />],
                    [1611, <Ic n="perspAdd" />], [1647, <Perspective><Ic n="person" s={18} /></Perspective>],
                ]} />
            </MainBar>
            <Workbench>
                <LeftColumn>
                    <Pane $h={640}>
                        <TabBar>
                            <Tab $active $w={257} $pad="0 0 0 4px">
                                <Ic n="navDb" />
                                <span>Navigateur de bases de donn...</span>
                                <CloseX />
                            </Tab>
                            <Tab $pad="0 0 0 4px" $gap={4}><Ic n="project" /><span>Projets</span></Tab>
                            <TabEnd $gap={15} $pr={14}><MinBtn /><MaxBtn /></TabEnd>
                        </TabBar>
                        <NavTools>
                            <Strip items={[
                                [234, <Ic n="plugNew" />], [262, <Chevron c="#4a4e51" />],
                                [280, <Ic n="folderNew" />], [323, <Ic n="collapse" />], [347, <Ic n="swap" />], [389, <Dots />],
                            ]} last={10} />
                        </NavTools>
                        <SearchRow>
                            <SearchBox>Enter a part of object name here</SearchBox>
                            <Ic n="funnel" />
                        </SearchRow>
                        <TreeList>
                            <TreeRow $pad={7} $gap={2}><Chevron /><Ic n="dbOk" /><span>h2gisdb.mv.db</span></TreeRow>
                            <TreeRow $pad={25} $gap={2.5} $bold><Chevron /><Ic n="schema" /><span>PUBLIC</span></TreeRow>
                            <TreeRow $pad={42} $gap={2.5}><Chevron /><Ic n="tables" /><span>Tables</span></TreeRow>
                            {tree.map((t) => (
                                <TreeRow key={t} $pad={60} $gap={3}><Chevron dir="right" /><Ic n="table" /><span>{t}</span></TreeRow>
                            ))}
                        </TreeList>
                    </Pane>
                    <Pane $h={275}>
                        <TabBar>
                            <Tab $active $w={162} $pad="0 0 0 4px">
                                <Ic n="projectWide" />
                                <span>Project - General</span>
                                <CloseX />
                            </Tab>
                            <TabEnd $pr={14} $gap={11}>
                                <Ic n="gear" />
                                <Ic n="collapse" />
                                <Ic n="plus" />
                                <Ic n="swap" />
                                <WinCtl $ml={9}><MinBtn /><MaxBtn /></WinCtl>
                            </TabEnd>
                        </TabBar>
                        <ColumnHead>
                            <ColumnCell $w={250}>Name</ColumnCell>
                            <ColumnCell>DataSource</ColumnCell>
                        </ColumnHead>
                        <TreeList>
                            <TreeRow $pad={7} $gap={2.5}><Chevron dir="right" /><Ic n="folder" /><span>Bookmarks</span></TreeRow>
                            <TreeRow $pad={7} $gap={2.5}><Chevron dir="right" /><Ic n="folderEr" /><span>ER Diagrams</span></TreeRow>
                            <TreeRow $pad={7} $gap={2.5}><Chevron dir="right" /><Ic n="folderSc" /><span>Scripts</span></TreeRow>
                        </TreeList>
                    </Pane>
                </LeftColumn>
                <RightColumn>
                    <Pane $h={711}>
                        <TabBar>
                            <Tab $pad="0 0 0 4px" $w={218}><Ic n="script" /><span>&lt;h2gisdb.mv.db&gt; Script-1</span></Tab>
                            <Tab $active $line $pad="0 0 0 3px" $w={123}><Ic n="table" /><span>BUILDINGS</span><CloseX /></Tab>
                            <TabEnd $gap={15}><MinBtn /><MaxBtn /></TabEnd>
                        </TabBar>
                        <SubTabs>
                            <Tab $pad="0 8px 0 6px" $gap={4}><Ic n="table" /><span>Propriétés</span></Tab>
                            <Tab $active $pad="0 5px 0 4px" $gap={5}><Ic n="data" /><span>Données</span></Tab>
                            <Tab $pad="0 0 0 3px" $gap={5}><Ic n="er" /><span>ER Diagram</span></Tab>
                            <Crumbs>
                                <Strip last={93} items={[
                                    [0, <Ic n="dbOk" />], [29, <DimText>h2gisdb.mv.db</DimText>], [138, <Ic n="schema" />],
                                    [165, <DimText>PUBLIC</DimText>], [224, <Ic n="tables" />], [253, <DimText>Tables</DimText>],
                                    [308, <Chevron c="#5d6265" />], [326, <Ic n="table" />], [354, <DimText>BUILDINGS</DimText>],
                                ]} />
                            </Crumbs>
                        </SubTabs>
                        <FilterRow>
                            <FilterBox>
                                <FilterTable>
                                    <Ic n="table" />
                                    <span>BUILDINGS</span>
                                    <Ic n="expand" />
                                </FilterTable>
                                <FilterHint>Entrez une expression SQL pour filtrer les résultats (utilisez Ctrl+Espace)</FilterHint>
                                <FilterEnd><Ic n="play" s={14} /><Ic n="dropGrey" s={12} /></FilterEnd>
                            </FilterBox>
                            <Strip last={12} items={[
                                [14, <Ic n="eraser" />], [41, <Ic n="funnelOk" />], [69, <Ic n="saveCfg" />],
                                [92, <Dots />], [109, <Ic n="refresh" />], [150, <Dots />], [168, <Ic n="arrowL" />], [191, <Chevron />],
                                [213, <Ic n="arrowR" />], [237, <Chevron />],
                            ]} />
                        </FilterRow>
                        <EditorBody>
                            <VerticalTabs>
                                <VTab $active $h={74}><VLabel>Grille</VLabel><Ic n="gridSmall" /></VTab>
                                <VTab $h={56} $mt={12}><VLabel>Texte</VLabel><Ic n="ttext" /></VTab>
                                <VTab $h={66} $mt={18}><VLabel>Spatial</VLabel><Ic n="globeSmall" /></VTab>
                                <VTab $h={70} $mt={234}><VLabel>Record</VLabel><Ic n="record" /></VTab>
                            </VerticalTabs>
                            <GridWrap>
                                <GridRow $head>
                                    <HeadCell />
                                    <HeadCell><Ic n="pk" /><span>PK</span><SortMark><Ic n="sort" /></SortMark></HeadCell>
                                    <HeadCell $sel><Ic n="geom" /><ClippedName> THE_GEOM</ClippedName><SortMark><Ic n="sort" /></SortMark></HeadCell>
                                    <HeadCell><Ic n="text123" s={18} /><span>HEIGHT</span><SortMark><Ic n="sort" /></SortMark></HeadCell>
                                </GridRow>
                                {rows.map((r, i) => {
                                    const sel = i === 7 || i === 8
                                    const geomBg = i === 7 ? '#3376d8' : i === 8 ? '#275694' : null
                                    const sideBg = sel ? '#2f4258' : null
                                    return (
                                        <GridRow key={r[0]}>
                                            <NumCell $active={i === 7} $focus={i === 8}>{i + 1}</NumCell>
                                            <DataCell $odd={i % 2} $bg={sideBg}>{r[0]}</DataCell>
                                            <DataCell $odd={i % 2} $bg={geomBg} $color={sel ? '#f4f4f4' : undefined} $cursor={i === 7}>POLYGON (({r[1]}48</DataCell>
                                            <DataCell $odd={i % 2} $bg={sideBg} $right>{r[2]}</DataCell>
                                        </GridRow>
                                    )
                                })}
                            </GridWrap>
                            <ValuePanel>
                                <ValueTabs>
                                    <Tab $active $flat $w={201} $pad="0 0 0 3px">
                                        <Ic n="viewer" />
                                        <span>Visionneuse de valeurs</span>
                                        <CloseX />
                                    </Tab>
                                    <ValueTools>
                                        <MapToggle $ml={91}><Ic n="globe" /><span>Map</span></MapToggle>
                                        <Strip last={20} items={[
                                            [16, <Ic n="bigT" />], [44, <DimText $c="#55595c">Text</DimText>],
                                            [89, <Ic n="dropWhite" s={13} />], [124, <MinBtn />],
                                        ]} />
                                    </ValueTools>
                                </ValueTabs>
                                <MapFrame>
                                    <MapDrawing />
                                    <ZoomBox>
                                        <ZoomBtn $off>+</ZoomBtn>
                                        <ZoomBtn>−</ZoomBtn>
                                    </ZoomBox>
                                    <LayersBtn>
                                        <svg width="22" height="22" viewBox="0 0 22 22">
                                            <path d="M11 3l9 5-9 5-9-5z" fill="#d0d0d0" stroke="#b0b0b0" />
                                            <path d="M2 11l9 5 9-5M2 14l9 5 9-5" fill="none" stroke="#a0a0a0" strokeWidth="1.6" />
                                        </svg>
                                    </LayersBtn>
                                    <Attribution>
                                        <MapLink>Leaflet</MapLink> | © <MapLink>OpenStreetMap</MapLink> contributors
                                    </Attribution>
                                </MapFrame>
                                <ValueBar>
                                    <Strip last={30} items={[
                                        [10, <Ic n="viewMap" />], [37, <Ic n="image" />], [64, <Ic n="imageAdd" />], [90, <Ic n="printer" />],
                                        [126, <Ic n="chart" />], [144, <DimText $c="#343739">EPSG:2154</DimText>], [254, <Ic n="image" />],
                                        [284, <DimText $c="#343739">OpenStreetMap</DimText>], [424, <Ic n="swap" />],
                                        [460, <PaletteBtn><Ic n="palette" /></PaletteBtn>],
                                    ]} />
                                </ValueBar>
                            </ValuePanel>
                            <SideStrip>
                                <SideTab><Ic n="viewer" /><VLabel $down>Panneaux</VLabel></SideTab>
                                <Ic n="panels" />
                                <Ic n="checker" />
                                <Ic n="grid" />
                                <Ic n="dotsRound" />
                                <SideFrame><Ic n="viewer" /></SideFrame>
                            </SideStrip>
                        </EditorBody>
                        <DataBar>
                            <Strip origin={412} items={[
                                [447, <Ic n="ok" />], [475, <DimText>Save</DimText>], [516, <Ic n="cancel" />], [544, <DimText>Cancel</DimText>],
                                [599, <Ic n="scriptRun" />], [627, <DimText>Script</DimText>], [695, <Ic n="rowEdit" />], [722, <Ic n="rowAdd" />],
                                [751, <Ic n="rowCopy" />], [777, <Ic n="rowDel" />], [810, <Dots />], [827, <Ic n="first" />],
                                [855, <Ic n="prev" />], [883, <Ic n="next" />], [910, <Ic n="last" />], [949, <Ic n="pageDown" />],
                                [977, <Ic n="focus" />], [1009, <Dots />], [1037, <Ic n="exportUp" />], [1071, <Dots />],
                                [1089, <Ic n="gear" />], [1117, <FetchInput>200</FetchInput>], [1203, <Ic n="sync" />],
                                [1233, <DimText $c="#a0a0a0">200+</DimText>], [1270, <Dots />],
                                [1280, <DimText $c="#a0a0a0">Rows: 2</DimText>],
                            ]} last={60} />
                        </DataBar>
                        <StatusLine>
                            <Ic n="fetchInfo" />
                            <span>200 row(s) fetched - 11ms (8ms fetch), on juin 14, 14:57:00</span>
                            <StatusEnd><Ic n="panelBack" /></StatusEnd>
                        </StatusLine>
                    </Pane>
                    <Pane $h={204}>
                        <TabBar $h={34}>
                            <Tab $pad="0 0 0 4px" $w={176}><Ic n="tasks" /><span>Tâches en arrière plan</span></Tab>
                            <Tab $active $w={122} $pad="0 0 0 4px" $gap={3}><Ic n="problems" /><span>Problèmes</span><CloseX /></Tab>
                            <TabEnd $gap={15}>
                                <Ic n="funnelPlain" />
                                <Dots $ml={9} $mr={12} />
                                <MinBtn />
                                <MaxBtn />
                            </TabEnd>
                        </TabBar>
                        <CountLine>0 éléments</CountLine>
                        <ColumnHead $h={33}>
                            <ColumnCell $w={301}>Description de l’erreur</ColumnCell>
                            <ColumnCell $w={90}>Ressource</ColumnCell>
                            <ColumnCell $w={120}>Chemin d’accès</ColumnCell>
                            <ColumnCell $w={90}>Emplacement</ColumnCell>
                            <ColumnCell>Type</ColumnCell>
                        </ColumnHead>
                    </Pane>
                </RightColumn>
            </Workbench>
            <StatusBar>
                <Strip items={[[1317, <span>CET</span>], [1356, <span>fr_FR</span>], [1396, <Dots />]]} last={10} />
            </StatusBar>
        </Window>
    )
}

export default App
